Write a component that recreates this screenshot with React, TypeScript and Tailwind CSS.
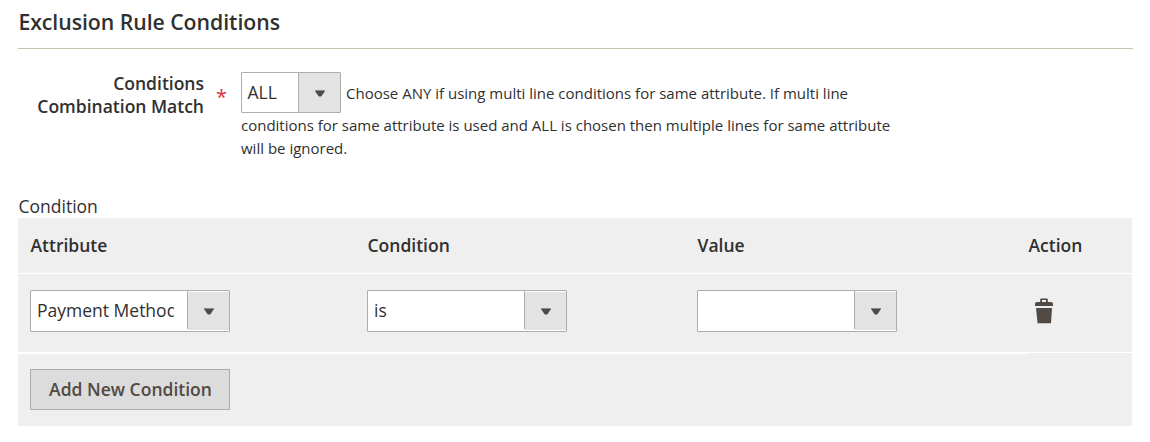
import React from "react";

function Arrow() {
  return (
    <svg width="10" height="7" viewBox="0 0 10 7" className="block">
      <path d="M0 0h10v1L6.2 6.6H3.8L0 1z" fill="#514943" />
      <path d="M0 0h10v1H0z" fill="#8d8884" />
    </svg>
  );
}

function Select({ value }: { value: string }) {
  return (
    <div className="flex h-[42px] w-[200px] rounded-[1px] border border-[#adadad] bg-white">
      <div className="w-[156px] overflow-hidden pl-1.5 pr-[13px]">
        <div className="overflow-hidden whitespace-nowrap text-[17.5px] leading-[38px]">{value}</div>
      </div>
      <div className="h-[38px] w-px bg-[#adadad]" />
      <div className="mt-px flex h-[38px] w-[41px] items-start justify-center bg-[#e3e3e3] pt-4">
        <Arrow />
      </div>
    </div>
  );
}

function Trash() {
  return (
    <svg width="18" height="26" viewBox="0 0 18 26" className="block" fill="#514943">
      <path fillRule="evenodd" d="M5.2 4V1.6Q5.2.5 6.3.5h5.4q1.1 0 1.1 1.1V4h3.2q2 0 2 2v2H0V6q0-2 2-2zM7 4h4V2H7z" />
      <path d="M1 10h16l-1 15.3H2.600z" />
    </svg>
  );
}

export default function App() {
  return (
    <main className="h-[442px] w-[1150px] overflow-hidden bg-white pl-[18px] font-['Open_Sans',sans-serif] text-[#303030]">
      <h2 className="h-[49px] w-[1115px] border-b border-[#cac3b4] pl-[0.4px] pt-[7px] text-[21.25px] font-semibold leading-[30px] tracking-[-0.05px]">
        Exclusion Rule Conditions
      </h2>

      <div className="flex h-[145px] pt-[23px]">
        <div className="w-[186px] text-right text-[17.5px] font-semibold leading-[23px]">
          Conditions
          <br />
          Combination Match
        </div>
        <div className="w-[37px] pl-3 pt-[13px] text-[20px] leading-[23px] text-[#e22640]">*</div>
        <div className="text-[15px] leading-[23px]">
          <div className="flex h-[42px]">
            <div className="flex h-[41px] w-[100px] rounded-[1px] border border-[#adadad] bg-white">
              <div className="w-[56px] pl-[5.5px] text-[17.5px] leading-[39px]">ALL</div>
              <div className="flex w-[42px] items-start justify-center border-l border-[#adadad] bg-[#e3e3e3] pt-[17px]">
                <Arrow />
              </div>
            </div>
            <div className="whitespace-nowrap pl-[5px] pt-[10px]">
              Choose ANY if using multi line conditions for same attribute. If multi line
            </div>
          </div>
          <div className="whitespace-nowrap">
            conditions for same attribute is used and ALL is chosen then multiple lines for same attribute
            <br />
            will be ignored.
          </div>
        </div>
      </div>

      <div className="h-6 pl-[0.5px] text-[17.5px] leading-6">Condition</div>

      <section className="w-[1114px] bg-[#efefef]">
        <div className="grid h-[56px] grid-cols-[337px_330px_331px_1fr] border-b border-white pl-[12.5px] text-[17.5px] font-semibold leading-[55px]">
          <div>Attribute</div>
          <div>Condition</div>
          <div>Value</div>
          <div>Action</div>
        </div>
        <div className="grid h-[78px] grid-cols-[337px_330px_331px_1fr] pl-3 pt-4">
          <Select value="Payment Method" />
          <Select value="is" />
          <Select value="" />
          <div className="pl-[7px] pt-2">
            <Trash />
          </div>
        </div>
        <div className="flex h-0.5">
          <div className="h-0.5 w-[1010px] bg-white" />
          <div className="h-px flex-1 bg-white" />
        </div>
        <div className="h-[72px] pl-3 pt-[15px]">
          <button className="block h-[41px] w-[200px] border border-[#adadad] bg-[#dcdcdc] pl-px text-center text-[17.5px] font-semibold leading-[39px] text-[#514943]">
            Add New Condition
          </button>
        </div>
      </section>
    </main>
  );
}
